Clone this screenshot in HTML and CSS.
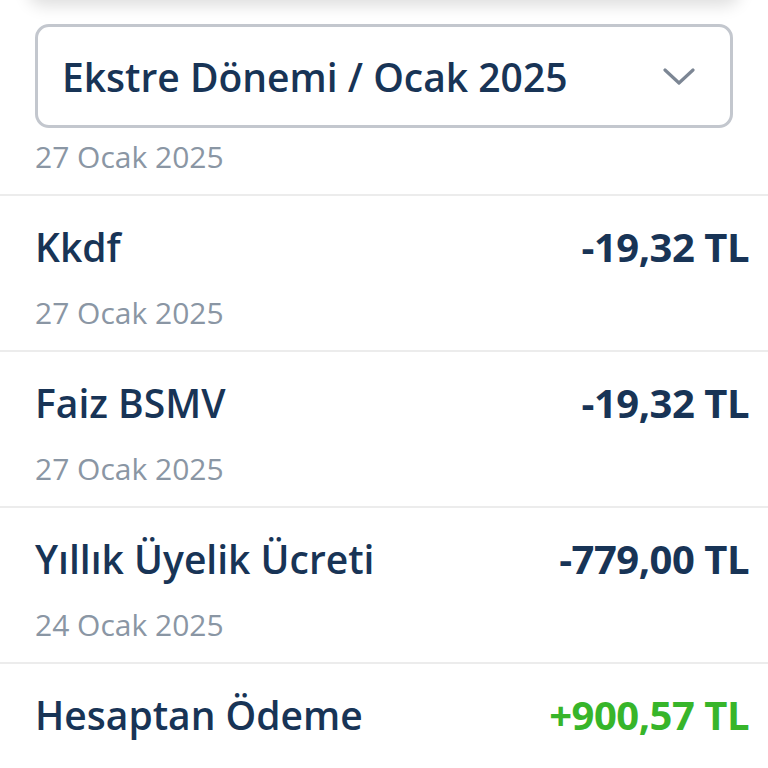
FILE: index.html
```html
<!DOCTYPE html>
<html lang="tr">
<head>
<meta charset="utf-8">
<link rel="stylesheet" href="styles.css">
</head>
<body>
<div class="page">
  <div class="top-card"></div>
  <div class="filter">
    <button class="select">
      <span class="select-label">Ekstre Dönemi / Ocak 2025</span>
      <svg class="chevron" width="32" height="18" viewBox="0 0 32 18"><path d="M2 2 L16 15 L30 2" fill="none" stroke="#7c8694" stroke-width="3.2" stroke-linecap="round" stroke-linejoin="round"/></svg>
    </button>
    <div class="date">27 Ocak 2025</div>
  </div>
  <ul class="list">
    <li class="item">
      <div class="line"><span class="title">Kkdf</span><span class="amount">-19,32 TL</span></div>
      <div class="date">27 Ocak 2025</div>
    </li>
    <li class="item">
      <div class="line"><span class="title">Faiz BSMV</span><span class="amount">-19,32 TL</span></div>
      <div class="date">27 Ocak 2025</div>
    </li>
    <li class="item">
      <div class="line"><span class="title">Yıllık Üyelik Ücreti</span><span class="amount">-779,00 TL</span></div>
      <div class="date">24 Ocak 2025</div>
    </li>
    <li class="item">
      <div class="line"><span class="title">Hesaptan Ödeme</span><span class="amount positive">+900,57 TL</span></div>
    </li>
  </ul>
</div>
</body>
</html>
```

FILE: styles.css
```css
* { box-sizing: border-box; }
html, body {
  margin: 0;
  padding: 0;
  background: #ffffff;
  overflow: hidden;
}
body {
  font-family: "Open Sans", "Noto Sans", sans-serif;
  color: #183456;
}
.page {
  width: 768px;
  height: 768px;
  overflow: hidden;
}
.top-card {
  height: 30px;
  margin: -30px 28px 0;
  background: #fff;
  border-radius: 16px;
  box-shadow: 0 6px 16px rgba(0, 0, 0, 0.13);
}
.filter {
  padding: 24px 35px 18px;
  border-bottom: 2px solid #ececec;
}
.select {
  width: 698px;
  height: 104px;
  display: flex;
  align-items: center;
  justify-content: space-between;
  padding: 0 35px 0 24px;
  background: #fff;
  border: 3px solid #c3c7ce;
  border-radius: 14px;
  font: inherit;
  color: inherit;
  margin: 0 0 10px;
}
.select-label {
  font-size: 39px;
  font-weight: 600;
  color: #183456;
}
.chevron { display: block; margin-top: 2px; }
.date {
  font-size: 30px;
  font-weight: 400;
  line-height: 38px;
  color: #8a96a4;
}
.list {
  list-style: none;
  margin: 0;
  padding: 0;
}
.item {
  padding: 24px 19px 18px 35px;
  border-bottom: 2px solid #ececec;
}
.line {
  display: flex;
  justify-content: space-between;
  align-items: baseline;
  height: 54px;
  line-height: 54px;
  margin-bottom: 20px;
}
.title {
  font-size: 39px;
  font-weight: 600;
  color: #183456;
}
.amount {
  font-size: 40px;
  font-weight: 700;
  color: #183456;
  letter-spacing: -0.5px;
}
.amount.positive { color: #37b52a; }
```
